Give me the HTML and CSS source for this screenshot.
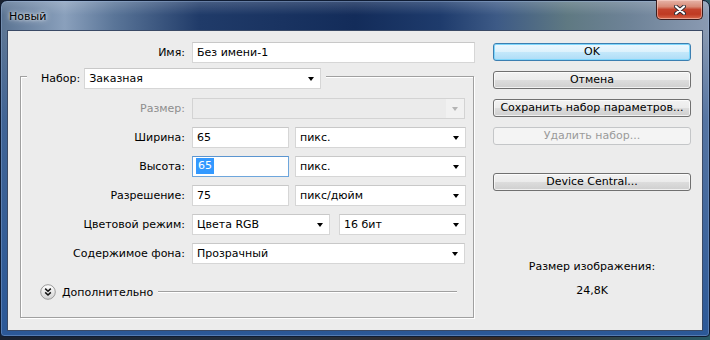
FILE: index.html
```html
<!DOCTYPE html>
<html lang="ru">
<head>
  <meta charset="UTF-8">
  <title>Новый</title>
  <link rel="stylesheet" href="styles.css">
</head>
<body>
  <!-- Window frame -->
  <div class="window">
    <div class="titlebar">
      <span class="title">Новый</span>
      <div class="close-btn">
        <svg width="12" height="10" viewBox="0 0 12 10">
          <path d="M2 1.5 L10 8.5 M10 1.5 L2 8.5" stroke="#2b2b33" stroke-width="4" stroke-linecap="round"/>
          <path d="M2 1.5 L10 8.5 M10 1.5 L2 8.5" stroke="#fff" stroke-width="2.2" stroke-linecap="round"/>
        </svg>
      </div>
    </div>

    <!-- CLIENT AREA -->
    <div class="client">
      <div class="form">
        <div class="row name-row">
          <span class="lbl">Имя:</span>
          <div class="field w-name">Без имени-1</div>
        </div>

        <div class="group">
          <div class="legend">
            <span class="legend-lbl">Набор:</span>
            <div class="field combo w-preset"><span>Заказная</span></div>
          </div>

          <div class="group-rows">
            <div class="row">
              <span class="lbl disabled">Размер:</span>
              <div class="field combo is-disabled w-full"><span></span><i class="arrow-box"></i></div>
            </div>
            <div class="row">
              <span class="lbl">Ширина:</span>
              <div class="field w-num">65</div>
              <div class="field combo w-unit"><span>пикс.</span></div>
            </div>
            <div class="row">
              <span class="lbl">Высота:</span>
              <div class="field w-num focused"><span class="sel">65</span></div>
              <div class="field combo w-unit"><span>пикс.</span></div>
            </div>
            <div class="row">
              <span class="lbl">Разрешение:</span>
              <div class="field w-num">75</div>
              <div class="field combo w-unit"><span>пикс/дюйм</span></div>
            </div>
            <div class="row">
              <span class="lbl">Цветовой режим:</span>
              <div class="field combo w-mode"><span>Цвета RGB</span></div>
              <div class="field combo w-bits"><span>16 бит</span></div>
            </div>
            <div class="row">
              <span class="lbl">Содержимое фона:</span>
              <div class="field combo w-full"><span>Прозрачный</span></div>
            </div>
          </div>

          <div class="more">
            <svg class="more-icon" width="16" height="16" viewBox="0 0 16 16">
              <defs>
                <linearGradient id="ball" x1="0" y1="0" x2="0" y2="1">
                  <stop offset="0" stop-color="#ffffff"/>
                  <stop offset="1" stop-color="#d2d2d2"/>
                </linearGradient>
              </defs>
              <circle cx="8" cy="8" r="7.3" fill="url(#ball)" stroke="#9a9a9a" stroke-width="1"/>
              <path d="M5.2 4.6 L8 7.2 L10.8 4.6 M5.2 8.4 L8 11 L10.8 8.4" fill="none" stroke="#111" stroke-width="1.5"/>
            </svg>
            <span>Дополнительно</span>
            <div class="more-line"></div>
          </div>
        </div>
      </div>

      <!-- BUTTONS -->
      <div class="side">
        <div class="btn btn-default">OK</div>
        <div class="btn">Отмена</div>
        <div class="btn">Сохранить набор параметров...</div>
        <div class="btn btn-disabled">Удалить набор...</div>
        <div class="btn btn-device">Device Central...</div>
        <div class="info">
          <p>Размер изображения:</p>
          <p>24,8K</p>
        </div>
      </div>
    </div>
  </div>
</body>
</html>
```

FILE: styles.css
```css
/* ====== RESET ====== */
* {
  margin: 0;
  padding: 0;
  box-sizing: border-box;
}

body {
  width: 710px;
  height: 340px;
  overflow: hidden;
  background: linear-gradient(to right, #1a2230, #24303e 40%, #3a2a22 70%, #2a5a66);
  font-family: "DejaVu Sans", Tahoma, sans-serif;
  font-size: 11px;
  color: #000;
}

/* ====== WINDOW FRAME ====== */
.window {
  width: 710px;
  height: 337px;
  padding: 0 6px 5px 6px;
  border: 1px solid #0f1c33;
  border-radius: 7px 7px 4px 4px;
  background:
    linear-gradient(to bottom, rgba(255,255,255,0.18), rgba(255,255,255,0) 14px),
    linear-gradient(to bottom, rgba(42,86,150,0) 0, rgba(42,86,150,0) 30px, rgba(42,86,150,0.55) 120px, #2b5897 100%),
    linear-gradient(to right, #5a7392 0%, #8aa0bc 9%, #5a7598 16%, #203b69 28%, #132c5a 50%, #1e3b6c 62%, #3d5a86 70%, #5f7982 80%, #6e8398 89%, #8a9ab2 100%);
  box-shadow: inset 0 0 0 1px rgba(160,190,230,0.35);
  display: flex;
  flex-direction: column;
}

.titlebar {
  height: 29px;
  display: flex;
  align-items: flex-start;
}
.title {
  padding: 9px 0 0 2px;
  color: #000;
  text-shadow: 0 0 6px rgba(255,255,255,0.9), 0 0 3px rgba(255,255,255,0.8);
}
.close-btn {
  margin-left: auto;
  width: 47px;
  height: 20px;
  margin-top: -1px;
  border: 1px solid #3b1d1d;
  border-top: none;
  border-radius: 0 0 5px 5px;
  background: linear-gradient(to bottom, #e6b4a8 0%, #d88a76 35%, #c4432c 50%, #bf3a22 75%, #d8684b 100%);
  box-shadow: inset 0 0 0 1px rgba(255,220,210,0.5);
  display: flex;
  align-items: center;
  justify-content: center;
}

.client {
  flex: 1;
  border: 1px solid #3a4a66;
  background-color: #ececec;
  display: flex;
}

/* ====== FORM COLUMN ====== */
.form {
  width: 485px;
}
.row {
  display: flex;
  align-items: center;
  gap: 6px;
  height: 21px;
}
.lbl {
  text-align: right;
  padding-right: 1px;
  white-space: nowrap;
}
.name-row {
  margin-top: 11px;
}
.name-row .lbl {
  width: 178px;
}
.lbl.disabled {
  color: #8e8e8e;
}

.field {
  height: 21px;
  line-height: 19px;
  background-color: #fff;
  border: 1px solid #d6d6d6;
  border-top-color: #c8c8c8;
  padding: 0 4px;
  white-space: nowrap;
}
.field.focused {
  border-color: #6ea6dc;
  border-top-color: #5b95d0;
}
.sel {
  display: inline-block;
  line-height: 16px;
  padding: 0 2px;
  margin-left: -1px;
  background-color: #3399ff;
  color: #fff;
  vertical-align: 1px;
}

.combo {
  display: flex;
  align-items: center;
  justify-content: space-between;
  padding-right: 6px;
}
.combo::after {
  content: "";
  border-left: 3.5px solid transparent;
  border-right: 3.5px solid transparent;
  border-top: 4px solid #000;
}
.combo.is-disabled {
  background-color: #ebebeb;
  border-color: #d3d3d3;
  padding-right: 0;
}
.combo.is-disabled::after {
  display: none;
}
.arrow-box {
  width: 18px;
  height: 19px;
  background-color: #f1f1f1;
  display: flex;
  align-items: center;
  justify-content: center;
}
.arrow-box::after {
  content: "";
  border-left: 3.5px solid transparent;
  border-right: 3.5px solid transparent;
  border-top: 4px solid #b4b4b4;
}

.w-name { width: 283px; }
.w-preset { width: 237px; }
.w-full { width: 273px; }
.w-num { width: 97px; }
.w-unit { width: 171px; }
.w-mode { width: 138px; }
.w-bits { width: 127px; margin-left: 3px; }

/* ====== GROUP BOX ====== */
.group {
  position: relative;
  margin: 13px 0 0 12px;
  width: 454px;
  padding: 21px 0 17px 0;
  border: 1px solid #a0a0a0;
  box-shadow: inset 1px 1px #fff, 1px 1px #fff;
}
.legend {
  position: absolute;
  top: -9px;
  left: 6px;
  padding: 0 5px 0 14px;
  background-color: #ececec;
  display: flex;
  align-items: center;
  gap: 4px;
}
.group-rows {
  display: flex;
  flex-direction: column;
  gap: 8px;
}
.group-rows .lbl {
  width: 165px;
}

/* Advanced toggle */
.more {
  display: flex;
  align-items: center;
  height: 16px;
  margin: 20px 16px 0 19px;
}
.more-icon {
  margin-right: 6px;
}
.more-line {
  flex: 1;
  height: 2px;
  margin-left: 5px;
  border-top: 1px solid #a0a0a0;
  border-bottom: 1px solid #fff;
}

/* ====== BUTTON COLUMN ====== */
.side {
  width: 198px;
  padding-top: 12px;
  display: flex;
  flex-direction: column;
  gap: 10px;
}
.btn {
  height: 18px;
  line-height: 16px;
  text-align: center;
  border: 1px solid #707070;
  border-radius: 3px;
  background: linear-gradient(to bottom, #f2f2f2 0%, #ebebeb 50%, #dddddd 50%, #cfcfcf 100%);
  box-shadow: inset 0 0 0 1px rgba(255,255,255,0.7);
  white-space: nowrap;
}
.btn-default {
  border-color: #3c7fb1;
  background: linear-gradient(to bottom, #eef8fe 0%, #dcf1fc 50%, #c4e8fb 50%, #aedcf6 100%);
  box-shadow: inset 0 0 0 1px #7fd6fb;
}
.btn-disabled {
  color: #9a9a9a;
  border-color: #c4c6c8;
  background: #f4f4f4;
  box-shadow: none;
}
.btn-device {
  margin-top: 18px;
}

.info {
  margin-top: 59px;
  text-align: center;
  line-height: 13px;
}
.info p + p {
  margin-top: 11px;
}
```
